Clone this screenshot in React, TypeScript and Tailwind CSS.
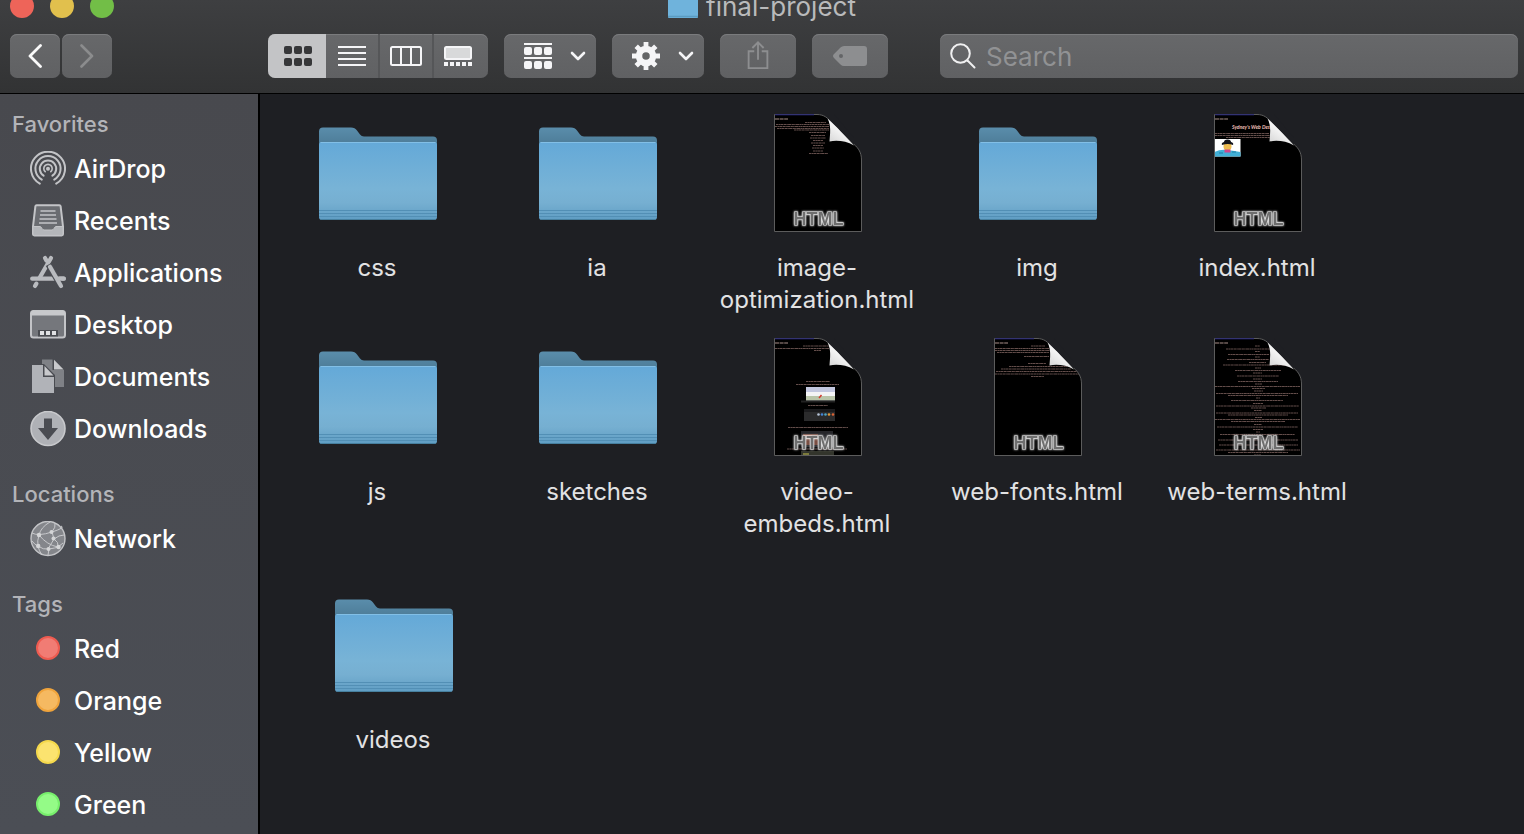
import type { ReactNode } from "react";

type IconProps = { children: ReactNode };

function SideIcon({ children }: IconProps) {
  return (
    <svg viewBox="0 0 36 36" className="size-9 shrink-0" fill="none" aria-hidden="true">
      {children}
    </svg>
  );
}

const AirDropIcon = (
  <SideIcon>
    <g stroke="#c3c4c7" strokeWidth="2" strokeLinecap="round">
      <path d="M9.8 32.6A17 17 0 1 1 26.2 32.6" />
      <path d="M11.8 28.6A12.6 12.6 0 1 1 24.2 28.6" />
      <path d="M13.6 24.6A8.2 8.2 0 1 1 22.4 24.6" />
      <path d="M15.2 20.7A4.2 4.2 0 1 1 20.8 20.7" strokeWidth="1.6" />
    </g>
    <circle cx="18" cy="17.8" r="2" fill="#c3c4c7" />
  </SideIcon>
);

const RecentsIcon = (
  <SideIcon>
    <path d="M6.6 2.2h22.8q1 0 1.200 1L33 23.500v7.500q0 1.400-1.400 1.400H4.400Q3 32.400 3 31v-7.500L5.400 3.200q.200-1 1.200-1z" fill="#6a6c71" stroke="#c3c4c7" strokeWidth="2" />
    <path d="M10.500 8h15M10 12h16M9.500 16h17M9 20h18" stroke="#c3c4c7" strokeWidth="1.700" />
    <path d="M3 23.500h7c1.500 0 2 3.500 4 3.500h8c2 0 2.500-3.500 4-3.500h7V31q0 1.400-1.400 1.400H4.400Q3 32.400 3 31z" fill="#b4b6ba" stroke="#c3c4c7" strokeWidth="1" />
  </SideIcon>
);

const ApplicationsIcon = (
  <SideIcon>
    <g stroke="#b9bbbf" strokeWidth="4.200" strokeLinecap="round">
      <path d="M2.200 23.700h31.600" />
      <path d="M21 3 9.500 23" />
      <path d="M6.400 28.600 5 31" />
      <path d="M15 3l1.500 2.600" />
    </g>
    <path d="M18.600 9.500 31 31" stroke="#4b4d53" strokeWidth="6.400" />
    <g stroke="#b9bbbf" strokeWidth="4.200" strokeLinecap="round">
      <path d="M20 11.800 31 31" />
      <path d="M28 23.700h5.800" />
    </g>
  </SideIcon>
);

const DesktopIcon = (
  <SideIcon>
    <rect x="1" y="4" width="34" height="26.500" rx="2.500" fill="#75777c" stroke="#c3c4c7" strokeWidth="2" />
    <path d="M1 8.500V6q0-2.500 2.500-2.500h29Q35 3.500 35 6v2.500z" fill="#c8c9cc" />
    <path d="M8 23h20v6.500H8z" fill="#4a4c51" />
    <path d="M10 24h4v4h-4zM16 24h4v4h-4zM22 24h4v4h-4z" fill="#e0e1e3" />
  </SideIcon>
);

const DocumentsIcon = (
  <SideIcon>
    <path d="M12 .500h10.500v10.500H34V28h-9V16L14 5h-2z" fill="#7f8186" />
    <path d="M24 .800 33.600 10.500H24z" fill="#c8c9cc" />
    <path d="M2 6h11v12h11v16H2z" fill="#b1b3b8" />
    <path d="M14.500 7 23.500 16.500h-9z" fill="#c8c9cc" />
  </SideIcon>
);

const DownloadsIcon = (
  <SideIcon>
    <circle cx="18" cy="17.500" r="17" fill="#afb1b6" stroke="#c8c9cc" strokeWidth="1.600" />
    <path d="M14 7.500h8V17h6l-10 12L8 17h6z" fill="#4a4c52" />
  </SideIcon>
);

const NetworkIcon = (
  <SideIcon>
    <circle cx="18" cy="17.500" r="17" fill="#84868b" stroke="#c3c4c7" strokeWidth="1.400" />
    <g stroke="#c8c9cc" strokeWidth="1">
      <path d="M2 12q6 3.500 20-1t9-6M9 14Q11 6 20 1M9 14q-2 6-1 11t4 9M8 25q5 4 11 3t10-2M9 14q8 10 19 12M22 11q4-5 3-9M22 11l2 7-6 10M24 18q5-4 10-4M24 18q5 3 4 8M8 25q-3-1-6-5M19 28l-1 6M28 26l5-4" />
    </g>
    <g fill="#d4d5d7">
      <circle cx="9" cy="14" r="2.200" />
      <circle cx="21.500" cy="11" r="2" />
      <circle cx="23.500" cy="17.500" r="2" />
      <circle cx="8.200" cy="25" r="2.200" />
      <circle cx="18.500" cy="28" r="2" />
      <circle cx="28.500" cy="26" r="2.200" />
    </g>
  </SideIcon>
);

const favorites = [
  { label: "AirDrop", icon: AirDropIcon },
  { label: "Recents", icon: RecentsIcon },
  { label: "Applications", icon: ApplicationsIcon },
  { label: "Desktop", icon: DesktopIcon },
  { label: "Documents", icon: DocumentsIcon },
  { label: "Downloads", icon: DownloadsIcon },
];

const locations = [{ label: "Network", icon: NetworkIcon }];

const tags = [
  { label: "Red", icon: <TagDot className="border-[#ee5b50] bg-[#f17c74]" /> },
  { label: "Orange", icon: <TagDot className="border-[#f0a43c] bg-[#f5b961]" /> },
  { label: "Yellow", icon: <TagDot className="border-[#f5d94c] bg-[#fbe36f]" /> },
  { label: "Green", icon: <TagDot className="border-[#77ef6c] bg-[#94fb87]" /> },
];

function TagDot({ className }: { className: string }) {
  return (
    <span className="flex w-9 justify-center pb-0.5">
      <span className={`size-6 rounded-full border-2 ${className}`} />
    </span>
  );
}

function SideSection({ title, items }: { title: string; items: { label: string; icon: ReactNode }[] }) {
  return (
    <section>
      <h2 className="pl-3 text-[22px] leading-[38px] font-medium text-[#b3b4b8]">{title}</h2>
      <ul>
        {items.map((item) => (
          <li key={item.label}>
            <a href="#" className="flex h-[52px] items-center gap-2 pl-[30px] text-[25px] font-medium text-white">
              {item.icon}
              <span className="pt-0.5">{item.label}</span>
            </a>
          </li>
        ))}
      </ul>
    </section>
  );
}

function FolderIcon() {
  return (
    <svg viewBox="0 0 120 94" className="h-[94px] w-[120px]" aria-hidden="true">
      <defs>
        <linearGradient id="folder-front" x1="0" y1="0" x2="0" y2="1">
          <stop offset="0" stopColor="#64a9d8" />
          <stop offset=".6" stopColor="#78b3d6" />
          <stop offset=".78" stopColor="#76afd1" />
          <stop offset="1" stopColor="#5f9dc3" />
        </linearGradient>
        <linearGradient id="folder-back" x1="0" y1="0" x2="0" y2="1">
          <stop offset="0" stopColor="#5a8dab" />
          <stop offset="1" stopColor="#4a7893" />
        </linearGradient>
      </defs>
      <path d="M1 22V5.500q0-4 4-4h28q4 0 6 3l3 4q1.500 2 4 2h69q4 0 4 4v8H1z" fill="url(#folder-back)" />
      <path d="M1 19q0-3 3-3h112q3 0 3 3v72q0 3-3 3H4q-3 0-3-3z" fill="url(#folder-front)" />
      <path d="M2.500 16.500h115" fill="none" stroke="#82bfe6" />
      <path d="M1 84.500h118M1 87.500h118M1 90.500h118" stroke="#528fb5" strokeWidth="1" />
      <path d="M2.500 93.500h115" stroke="#47809f" strokeWidth="1" />
    </svg>
  );
}

type Line = [x: number, y: number, width: number];

const imageLines: Line[] = [
  [31, 8.5, 21], [2, 10.5, 53], [1, 12.5, 54], [3, 14.5, 52], [20, 16, 35],
  [35, 18.5, 17], [37, 21.5, 14], [36, 24, 16], [39, 26.500, 10], [37, 29, 14], [39, 31.500, 10],
  [38, 34, 12], [39, 37, 10], [35, 39.500, 19],
];

const indexLines: Line[] = [[1, 19.5, 54], [60, 20, 12], [1, 21.500, 73], [12, 23.500, 52]];

const videoLines: Line[] = [
  [29, 8, 27], [1, 10.500, 54], [40, 12.500, 7], [32, 43.500, 24], [22, 46.500, 43],
  [34, 67.500, 20], [14, 89.500, 60], [13, 111, 60],
];

const fontLines: Line[] = [
  [37, 8, 14], [1, 10.500, 54], [1, 12.500, 55], [3, 14.500, 52], [30, 18.500, 25],
  [34, 25.500, 18], [15, 28.500, 58], [7, 31, 70], [2, 33.500, 82], [1, 36, 84], [37, 38.500, 13],
];

const termLines: Line[] = [
  [41, 8, 5], [12, 11, 44], [41, 13.500, 5], [14, 16.500, 41], [41, 19, 5], [13, 21.500, 42],
  [35, 24.500, 17], [9, 27, 66], [41, 30, 6], [21, 32.500, 46], [39, 35, 9], [23, 38, 42],
  [39, 41, 9], [24, 43.500, 40], [41, 46, 7], [1, 48.500, 85], [38, 50.500, 13], [40, 53, 9],
  [2, 55.500, 82], [14, 57.500, 60], [42, 60, 4], [17, 62.500, 52], [39, 65.500, 10],
  [2, 68, 83], [37, 70, 15], [40, 72.500, 8], [2, 75, 82], [14, 77, 60], [41, 79.500, 7],
  [1, 81.500, 85], [17, 83.500, 54], [40, 86.500, 8], [3, 89, 81], [39, 91.500, 10], [42, 94, 4],
  [6, 96.500, 75], [4, 102, 80], [5, 107, 79], [2, 112, 84], [14, 114.500, 60], [40, 117, 7],
];

function HtmlFileIcon({ lines, children }: { lines: Line[]; children?: ReactNode }) {
  return (
    <svg viewBox="0 0 88 118" className="h-[118px] w-[88px]" aria-hidden="true">
      <defs>
        <clipPath id="page-clip">
          <path d="M.500 .500H43C50 .500 54 4 58 9L77 28C84 33 87.500 38 87.500 46V117.500H.500z" />
        </clipPath>
        <linearGradient id="page-curl" x1=".6" y1=".3" x2=".1" y2="1">
          <stop offset="0" stopColor="#ffffff" />
          <stop offset="1" stopColor="#d2d2d2" />
        </linearGradient>
      </defs>
      <g clipPath="url(#page-clip)">
        <path d="M0 0h88v118H0z" fill="#000" />
        <path d="M1 5h13" stroke="#a98f8a" strokeWidth="1.200" strokeDasharray="4 .6" />
        <g stroke="#b8908a" strokeWidth=".9" strokeDasharray="2.300 .3 1.400 .3 3.100 .4" opacity=".6">
          {lines.map(([x, y, w]) => (
            <path key={`${x}-${y}`} d={`M${x} ${y}h${w}`} />
          ))}
        </g>
        {children}
      </g>
      <path d="M.500 .500H43C50 .500 54 4 58 9L77 28C84 33 87.500 38 87.500 46V117.500H.500z" fill="none" stroke="#5c5c5c" />
      <path d="M1 .800h39" stroke="#23237c" strokeWidth="1" />
      <path d="M50 0H60L80 24V31L55 5z" fill="#1e1f23" />
      <path d="M53.500 4.500C57.500 12 56 20 55.500 27.500 63 26 72 27 80 31.500 72 23 62 12 53.500 4.500z" fill="url(#page-curl)" />
      <text
        x="44.500"
        y="111"
        textAnchor="middle"
        fontSize="18"
        fill="#6e6e6e"
        stroke="#d8d8d8"
        strokeWidth="1.200"
        paintOrder="stroke"
        className="font-['Liberation_Sans',sans-serif] font-bold drop-shadow-[0_0_1px_#ffffff]"
      >
        HTML
      </text>
    </svg>
  );
}

const indexArt = (
  <>
    <text x="18" y="15" fontSize="5" fill="#f3c3bb" className="font-['Lato',sans-serif] font-bold italic">
      Sydney's Web Design
    </text>
    <path d="M.500 25h26v17.500H.500z" fill="#fff" />
    <path d="M.500 38q6-3 13-2t13 2v4.500h-26z" fill="#41afd6" />
    <path d="M5 39h4M18 38h4" stroke="#1d7fa6" />
    <circle cx="13.500" cy="32.500" r="4" fill="#eebc50" />
    <path d="M10.500 35.500h6v3h-6z" fill="#d0468c" />
    <path d="M8 31q-1-2 2-3 0-2.500 3.500-2.500T17 28q3 1 2 3-5-2-11 0z" fill="#15151b" />
  </>
);

const videoArt = (
  <>
    <path d="M32 49h29v13.500H32z" fill="#c4c8e0" />
    <path d="M32 54h29v4H32z" fill="#f4f4f6" />
    <path d="M32 58h29v4.500H32z" fill="#b9c4a9" />
    <path d="m45 60 2.500-3" stroke="#d23b2f" strokeWidth="1.500" />
    <path d="M27 62.500h34v2H27z" fill="#222" />
    <path d="M30 71h31v12H30z" fill="#2b2b2c" />
    <path d="M30 71h31v3H30z" fill="#1b1b1d" />
    <g>
      <circle cx="44.500" cy="76.500" r="1.300" fill="#b7c4d8" />
      <circle cx="48" cy="76.500" r="1.300" fill="#4485d6" />
      <circle cx="51.500" cy="76.500" r="1.300" fill="#4da5c0" />
      <circle cx="55" cy="76.500" r="1.300" fill="#e09a3a" />
      <circle cx="59" cy="76.500" r="1.300" fill="#db6234" />
    </g>
    <path d="M27 93h32v16H27z" fill="#26262a" />
    <path d="M29 96h15v11H29z" fill="#6e4034" />
    <path d="M30 97h8v4h-8z" fill="#c85a42" />
    <path d="M27 113h33v5H27z" fill="#33352c" />
    <path d="M29 116h6" stroke="#c6c24c" />
  </>
);

type Entry = { name: string; icon: ReactNode };

const entries: Entry[] = [
  { name: "css", icon: <FolderIcon /> },
  { name: "ia", icon: <FolderIcon /> },
  { name: "image-optimization.html", icon: <HtmlFileIcon lines={imageLines} /> },
  { name: "img", icon: <FolderIcon /> },
  { name: "index.html", icon: <HtmlFileIcon lines={indexLines}>{indexArt}</HtmlFileIcon> },
  { name: "js", icon: <FolderIcon /> },
  { name: "sketches", icon: <FolderIcon /> },
  { name: "video-embeds.html", icon: <HtmlFileIcon lines={videoLines}>{videoArt}</HtmlFileIcon> },
  { name: "web-fonts.html", icon: <HtmlFileIcon lines={fontLines} /> },
  { name: "web-terms.html", icon: <HtmlFileIcon lines={termLines} /> },
];

const looseEntries: Entry[] = [{ name: "videos", icon: <FolderIcon /> }];

function EntryGrid({ items, className }: { items: Entry[]; className: string }) {
  return (
    <ul className={`grid grid-cols-[repeat(auto-fill,220px)] ${className}`}>
      {items.map((entry) => (
        <li key={entry.name} className="h-56">
          <a href="#" className="flex flex-col items-center gap-[18px]">
            <span className="flex h-[122px] items-center">{entry.icon}</span>
            <span className="w-[208px] pr-0.5 text-center text-[24px] leading-8 text-[#e2e2e3]">{entry.name}</span>
          </a>
        </li>
      ))}
    </ul>
  );
}

const control =
  "flex h-11 items-center justify-center rounded-[7px] bg-linear-to-b from-[#67686a] to-[#606163] shadow-[inset_0_1px_0_#7a7b7d]";

const Chevron = (
  <svg viewBox="0 0 16 10" className="h-[10px] w-4" fill="none" stroke="#f5f5f7" strokeWidth="2.6" strokeLinecap="round" strokeLinejoin="round" aria-hidden="true">
    <path d="M2 2l6 6 6-6" />
  </svg>
);

export default function App() {
  return (
    <div className="flex min-h-screen flex-col bg-[#1e1f23] font-['Inter',sans-serif]">
      <header className="overflow-hidden border-b border-black bg-linear-to-b from-[#3e3f41] to-[#323334]">
        <div className="grid h-[34px] grid-cols-[1fr_auto_1fr] items-start">
          <div className="-mt-1.5 flex gap-4 pl-2.5">
            <button aria-label="Close" className="size-6 rounded-full bg-[#ee6459]" />
            <button aria-label="Minimize" className="size-6 rounded-full bg-[#e1c04d]" />
            <button aria-label="Zoom" className="size-6 rounded-full bg-[#72be47]" />
          </div>
          <h1 className="-mt-[9px] flex items-start gap-2 text-[26px] leading-8 text-[#b9babb]">
            <svg viewBox="0 0 30 27" className="h-[27px] w-[30px]" aria-hidden="true">
              <path d="M0 0h30v26q0 1-1 1H1q-1 0-1-1z" fill="#6fb3dc" />
              <path d="M0 25.500h30" stroke="#5b9cc2" strokeWidth="1.500" />
            </svg>
            final-project
          </h1>
        </div>
        <div className="flex items-center pr-1.5 pb-[15px] pl-2.5">
          <div className="flex gap-0.5">
            <button aria-label="Back" className={`${control} w-[50px]`}>
              <svg viewBox="0 0 14 24" className="h-6 w-3.5" fill="none" stroke="#fafafa" strokeWidth="2.800" strokeLinecap="round" strokeLinejoin="round">
                <path d="M12.500 1.500 2 12l10.500 10.500" />
              </svg>
            </button>
            <button aria-label="Forward" className={`${control} w-[50px]`}>
              <svg viewBox="0 0 14 24" className="h-6 w-3.5" fill="none" stroke="#8b8c8d" strokeWidth="2.600" strokeLinecap="round" strokeLinejoin="round">
                <path d="M1.500 1.500 12 12 1.500 22.500" />
              </svg>
            </button>
          </div>

          <div className={`${control} ml-[156px] overflow-hidden`}>
            <button aria-label="Icon view" aria-pressed="true" className="flex h-11 w-[58px] items-center justify-center bg-[#c3c4c6] pl-0.5">
              <svg viewBox="0 0 28 20" className="h-5 w-7" fill="#363739">
                <rect width="8" height="8" rx="2" />
                <rect x="10" width="8" height="8" rx="2" />
                <rect x="20" width="8" height="8" rx="2" />
                <rect y="12" width="8" height="8" rx="2" />
                <rect x="10" y="12" width="8" height="8" rx="2" />
                <rect x="20" y="12" width="8" height="8" rx="2" />
              </svg>
            </button>
            <button aria-label="List view" className="flex h-11 w-[54px] items-center justify-center border-r-2 border-[#555658]">
              <svg viewBox="0 0 28 20" className="h-5 w-7" fill="#f5f5f7">
                <path d="M0 0h28v2H0zM0 6h28v2H0zM0 12h28v2H0zM0 18h28v2H0z" />
              </svg>
            </button>
            <button aria-label="Column view" className="flex h-11 w-[54px] items-center justify-center border-r-2 border-[#555658]">
              <svg viewBox="0 0 32 20" className="h-5 w-8" fill="none" stroke="#f5f5f7" strokeWidth="2">
                <rect x="1" y="1" width="30" height="18" rx="1.500" />
                <path d="M11 1v18M21 1v18" />
              </svg>
            </button>
            <button aria-label="Gallery view" className="flex h-11 w-[54px] items-center pl-2.5">
              <svg viewBox="0 0 28 20" className="h-5 w-7">
                <rect x="1" y="1" width="26" height="12" rx="1.500" fill="#d8d9da" stroke="#f5f5f7" strokeWidth="2" />
                <path d="M0 16h4v4H0zM6 16h4v4H6zM12 16h4v4h-4zM18 16h4v4h-4zM24 16h4v4h-4z" fill="#f5f5f7" />
              </svg>
            </button>
          </div>

          <button aria-label="Group items" className={`${control} ml-4 w-[92px] gap-[18px] pl-2.5`}>
            <svg viewBox="0 0 28 26" className="h-[26px] w-7" fill="#f5f5f7">
              <path d="M0 0h28v2H0zM0 14h28v2H0z" />
              <rect y="4" width="8" height="8" rx="2" />
              <rect x="10" y="4" width="8" height="8" rx="2" />
              <rect x="20" y="4" width="8" height="8" rx="2" />
              <rect y="18" width="8" height="8" rx="2" />
              <rect x="10" y="18" width="8" height="8" rx="2" />
              <rect x="20" y="18" width="8" height="8" rx="2" />
            </svg>
            {Chevron}
          </button>

          <button aria-label="Actions" className={`${control} ml-4 w-[92px] gap-[18px] pl-2.5`}>
            <svg viewBox="0 0 28 28" className="size-7">
              <g fill="none" stroke="#f5f5f7">
                <circle cx="14" cy="14" r="7" strokeWidth="6.500" />
                <path d="M14 0v5M14 23v5M0 14h5M23 14h5M4.200 4.200l3.600 3.600M20.200 20.200l3.600 3.600M4.200 23.800l3.600-3.600M20.200 7.800l3.600-3.600" strokeWidth="4.800" />
              </g>
            </svg>
            {Chevron}
          </button>

          <button aria-label="Share" className={`${control} ml-4 w-[76px]`}>
            <svg viewBox="0 0 24 32" className="h-8 w-6 pb-0.5" fill="none" stroke="#8d8e90" strokeWidth="2">
              <path d="M8 12H2v18h20V12h-6M12 21V2.500M6 8.500l6-6 6 6" />
            </svg>
          </button>

          <button aria-label="Edit tags" className={`${control} ml-4 w-[76px]`}>
            <svg viewBox="0 0 34 20" className="h-5 w-[34px]">
              <path fillRule="evenodd" d="M11 0h20q3 0 3 3v14q0 3-3 3H11q-2 0-3.500-1.500L1 12q-2-2 0-4l6.500-6.500Q9 0 11 0zM8 8a2 2 0 1 0 0 4 2 2 0 0 0 0-4z" fill="#8d8e90" />
            </svg>
          </button>

          <label className={`${control} ml-[52px] min-w-0 flex-1 gap-2.5 pl-2.5`}>
            <svg viewBox="0 0 26 26" className="size-[26px] shrink-0" fill="none" stroke="#f0f0f1" strokeWidth="2" strokeLinecap="round">
              <circle cx="10.500" cy="10.500" r="9.300" />
              <path d="m17.500 17.500 7 7" />
            </svg>
            <input
              type="search"
              aria-label="Search"
              placeholder="Search"
              className="h-full min-w-0 flex-1 bg-transparent text-[26px] text-white outline-none placeholder:text-[#919294]"
            />
          </label>
        </div>
      </header>

      <div className="flex flex-1">
        <nav aria-label="Sidebar" className="flex w-[260px] shrink-0 flex-col gap-5 border-r-2 border-black bg-linear-to-b from-[#48494e] to-[#4b4e55] pt-[11px]">
          <SideSection title="Favorites" items={favorites} />
          <SideSection title="Locations" items={locations} />
          <SideSection title="Tags" items={tags} />
        </nav>
        <main className="min-w-0 flex-1 pt-[18px] pl-2">
          <EntryGrid items={entries} className="" />
          <EntryGrid items={looseEntries} className="mt-6 pl-4" />
        </main>
      </div>
    </div>
  );
}
